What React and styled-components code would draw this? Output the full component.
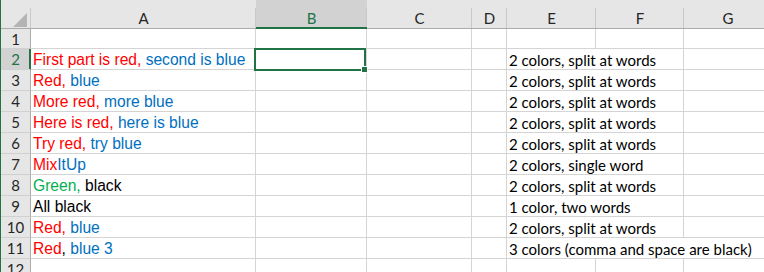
import React from 'react'
import styled, { createGlobalStyle, css } from 'styled-components'

const GlobalStyle = createGlobalStyle`
  body {
    margin: 0;
    background: #ffffff;
    overflow: hidden;
  }
`

const RED = '#ff0000'
const BLUE = '#0070c0'
const GREEN = '#00b050'
const BLACK = '#000000'
const XL_GREEN = '#217346'

const columns = ['A', 'B', 'C', 'D', 'E', 'F', 'G']

const rows = [
  { n: 1, a: [], e: '' },
  { n: 2, a: [[RED, 'First part is red,'], [BLUE, ' second is blue']], e: '2 colors, split at words' },
  { n: 3, a: [[RED, 'Red,'], [BLUE, ' blue']], e: '2 colors, split at words' },
  { n: 4, a: [[RED, 'More red,'], [BLUE, ' more blue']], e: '2 colors, split at words' },
  { n: 5, a: [[RED, 'Here is red,'], [BLUE, ' here is blue']], e: '2 colors, split at words' },
  { n: 6, a: [[RED, 'Try red,'], [BLUE, ' try blue']], e: '2 colors, split at words' },
  { n: 7, a: [[RED, 'Mix'], [BLUE, 'ItUp']], e: '2 colors, single word' },
  { n: 8, a: [[GREEN, 'Green,'], [BLACK, ' black']], e: '2 colors, split at words' },
  { n: 9, a: [[BLACK, 'All black']], e: '1 color, two words' },
  { n: 10, a: [[RED, 'Red,'], [BLUE, ' blue']], e: '2 colors, split at words' },
  { n: 11, a: [[RED, 'Red'], [BLACK, ', '], [BLUE, 'blue 3']], e: '3 colors (comma and space are black)', span: 3 },
  { n: 12, a: [], e: '' },
]

const Sheet = styled.div`
  display: grid;
  grid-template-columns: 30px 225px 111px 105px 35px 89px 88px 88px;
  grid-template-rows: 29px 20px repeat(11, 21px);
  border-left: 1px solid ${XL_GREEN};
  height: 272px;
  overflow: hidden;
`

const headerBand = css`
  background:
    linear-gradient(#c9c9c9, #c9c9c9) right 8px / 1px calc(100% - 8px) no-repeat,
    #e6e6e6;
`

const Corner = styled.div`
  ${headerBand};
  border-bottom: 1px solid #ababab;
  position: relative;
  svg {
    position: absolute;
    left: 12px;
    top: 13px;
  }
`

const ColHeader = styled.div`
  ${headerBand};
  ${({ $selected }) => $selected && css`
    background:
      linear-gradient(#c9c9c9, #c9c9c9) right 8px / 1px calc(100% - 8px) no-repeat,
      #d2d2d2;
  `}
  box-sizing: border-box;
  padding-top: 8px;
  border-bottom: ${({ $selected }) => ($selected ? `2px solid ${XL_GREEN}` : '1px solid #ababab')};
  display: flex;
  align-items: center;
  justify-content: center;
  font-family: Lato, 'Open Sans', sans-serif;
  font-size: 15px;
  color: ${({ $selected }) => ($selected ? XL_GREEN : '#262626')};
`

const RowHeader = styled.div`
  box-sizing: border-box;
  background: ${({ $selected }) => ($selected ? '#d2d2d2' : '#e6e6e6')};
  border-bottom: 1px solid #d0d0d0;
  border-right: 1px solid ${({ $selected }) => ($selected ? XL_GREEN : '#ababab')};
  box-shadow: ${({ $selected }) => ($selected ? `inset -1px 0 0 ${XL_GREEN}` : 'none')};
  display: flex;
  align-items: center;
  justify-content: center;
  font-family: Lato, 'Open Sans', sans-serif;
  font-size: 15px;
  color: ${({ $selected }) => ($selected ? XL_GREEN : '#262626')};
`

const Cell = styled.div`
  box-sizing: border-box;
  grid-column: span ${({ $span }) => $span || 1};
  border-right: 1px solid #d4d4d4;
  border-bottom: 1px solid #d4d4d4;
  display: flex;
  align-items: flex-end;
  padding: 0 2px 0;
  white-space: nowrap;
  position: relative;
  font-family: ${({ $body }) => ($body ? "Lato, 'Open Sans', sans-serif" : "'Liberation Sans', Arial, sans-serif")};
  font-size: ${({ $body }) => ($body ? '15px' : '15.6px')};
  line-height: 18px;
  color: #000;
`

const Run = styled.span`
  color: ${({ $color }) => $color};
`

const Selection = styled.div`
  position: absolute;
  left: -2px;
  top: -1px;
  right: 0;
  bottom: -2px;
  border: 2px solid ${XL_GREEN};
  pointer-events: none;
  z-index: 2;
`

const Handle = styled.div`
  position: absolute;
  right: -4px;
  bottom: -4px;
  width: 5px;
  height: 5px;
  background: ${XL_GREEN};
  border: 1px solid #ffffff;
`

const CornerTriangle = () => (
  <svg width="14" height="14" viewBox="0 0 14 14">
    <polygon points="14,0 14,14 0,14" fill="#b4b4b4" />
  </svg>
)

const App = () => {
  return (
    <>
      <GlobalStyle />
      <Sheet>
        <Corner>
          <CornerTriangle />
        </Corner>
        {columns.map((c) => (
          <ColHeader key={c} $selected={c === 'B'}>{c}</ColHeader>
        ))}
        {rows.map((r) => (
          <React.Fragment key={r.n}>
            <RowHeader $selected={r.n === 2}>{r.n}</RowHeader>
            <Cell>
              {r.a.map(([color, text], i) => (
                <Run key={i} $color={color}>{text.replace(/ /g, '\u00a0')}</Run>
              ))}
            </Cell>
            <Cell>
              {r.n === 2 && (
                <Selection>
                  <Handle />
                </Selection>
              )}
            </Cell>
            <Cell />
            <Cell />
            {r.e ? (
              <Cell $body $span={r.span || 2}>{r.e}</Cell>
            ) : (
              <>
                <Cell $body />
                <Cell />
              </>
            )}
            {(r.e ? 3 - (r.span || 2) : 1) > 0 && <Cell />}
          </React.Fragment>
        ))}
      </Sheet>
    </>
  )
}

export default App
